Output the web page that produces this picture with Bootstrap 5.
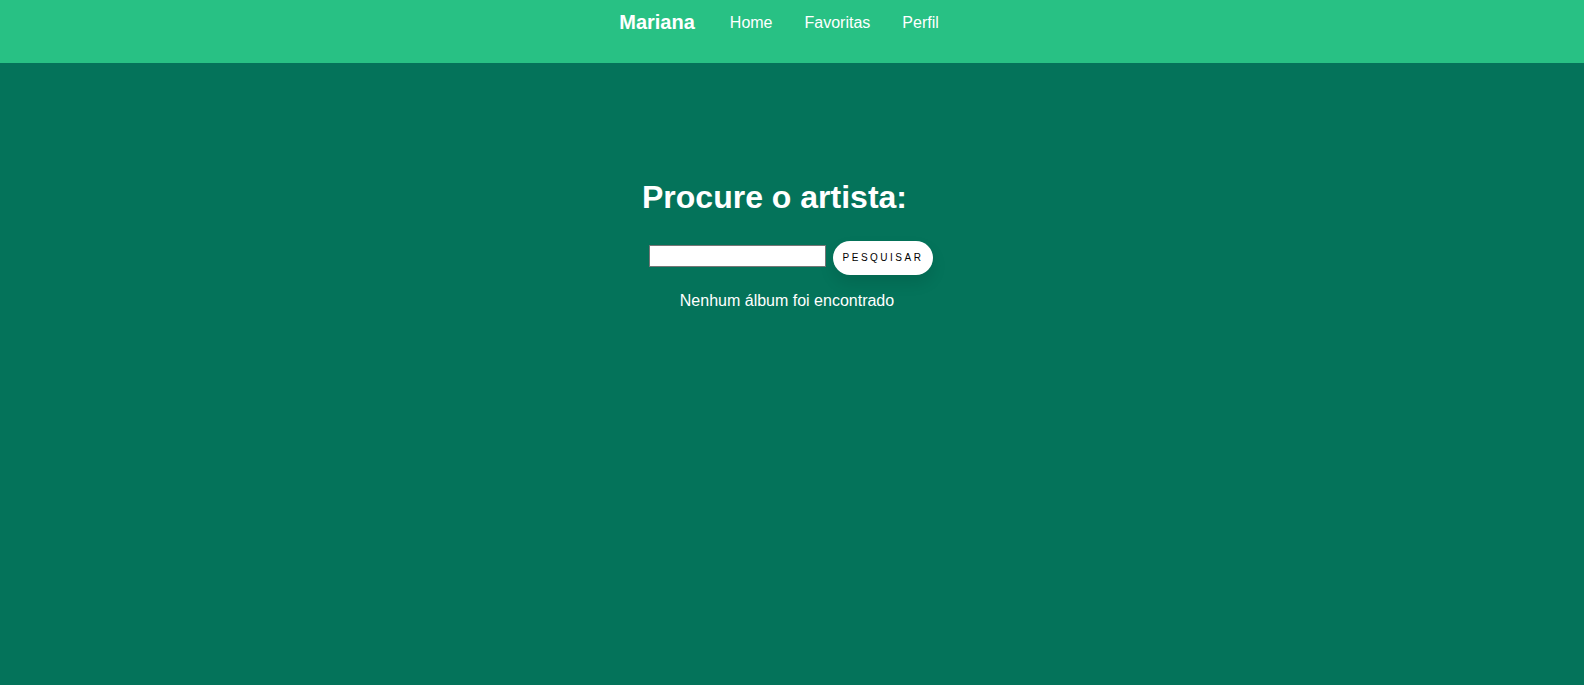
<!DOCTYPE html>
<html lang="pt-BR">
<head>
<meta charset="utf-8">
<meta name="viewport" content="width=device-width, initial-scale=1">
<title>Procure o artista</title>
<link rel="stylesheet" href="https://cdn.jsdelivr.net/npm/bootstrap@5.3.0/dist/css/bootstrap.min.css">
<style>
  body { background: #04735a; color: #fff; font-family: "Liberation Sans", Arial, sans-serif; font-size: 16px; line-height: 20px; }
  .top-bar { background: #28c184; padding: 12px 26px 29px 0; }
  .user-name { font-size: 20px; line-height: 20px; margin-right: 35px; }
  .top-links { gap: 32px; }
  .top-links .nav-link { color: #fff; line-height: 22px; }
  .search-area { padding-top: 116px; }
  .search-title { font-size: 32px; line-height: 36px; margin-bottom: 26px; padding-right: 35px; }
  .search-row { gap: 7px; padding-right: 2px; }
  .artist-input { width: 177px; height: 22px; border: 1px solid #767676; padding: 1px 2px; margin-top: 4px; border-radius: 0; }
  .search-btn { width: 100px; height: 34px; border: 0; border-radius: 17px; background: #fff; color: #000; font-size: 10px; line-height: 12px; letter-spacing: .25em; padding: 0; box-shadow: 0 8px 15px rgba(0, 0, 0, .1); }
  .result-text { margin-top: 16px; padding-right: 10px; }
</style>
</head>
<body>
<header class="top-bar d-flex justify-content-center align-items-start">
  <strong class="user-name">Mariana</strong>
  <nav class="top-links d-flex">
    <a class="nav-link" href="#">Home</a>
    <a class="nav-link" href="#">Favoritas</a>
    <a class="nav-link" href="#">Perfil</a>
  </nav>
</header>
<main class="search-area d-flex flex-column align-items-center">
  <h1 class="search-title fw-bold"><label for="artist">Procure o artista:</label></h1>
  <form class="search-row d-flex align-items-start">
    <input class="artist-input" id="artist" type="text">
    <button class="search-btn text-uppercase" type="button">Pesquisar</button>
  </form>
  <p class="result-text mb-0">Nenhum álbum foi encontrado</p>
</main>
<script src="https://cdn.jsdelivr.net/npm/bootstrap@5.3.0/dist/js/bootstrap.bundle.min.js"></script>
</body>
</html>
